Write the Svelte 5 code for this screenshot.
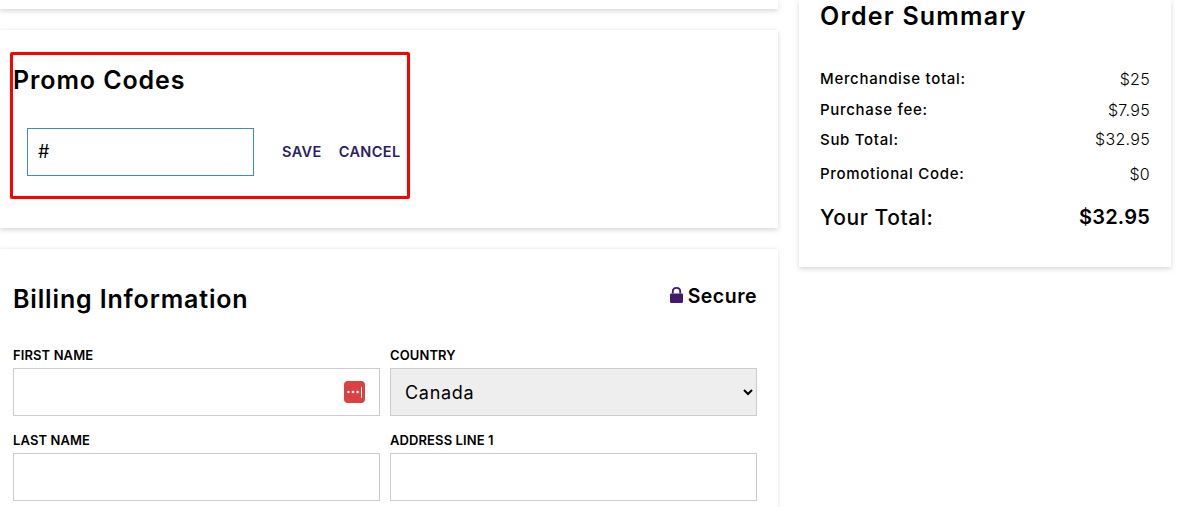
<script>
  const rows = [
    { label: 'Merchandise total:', value: '$25', cls: 'r1' },
    { label: 'Purchase fee:', value: '$7.95', cls: 'r2' },
    { label: 'Sub Total:', value: '$32.95', cls: 'r3' },
    { label: 'Promotional Code:', value: '$0', cls: 'r4' }
  ];
</script>

<div class="page">
  <div class="left">
    <div class="card top"></div>
    <section class="card promo">
      <div class="mark">
        <h2>Promo Codes</h2>
        <div class="promo-row">
          <input class="code" value="#" />
          <button class="link save">SAVE</button>
          <button class="link cancel">CANCEL</button>
        </div>
      </div>
    </section>
    <section class="card billing">
      <div class="billing-head">
        <h2>Billing Information</h2>
        <div class="secure">
          <svg class="lock" width="13" height="16" viewBox="0 0 14 17" aria-hidden="true">
            <path d="M3 7V4.8C3 2.4 4.8.9 7 .9s4 1.5 4 3.9V7" fill="none" stroke="#451a6e" stroke-width="2"/>
            <rect x="0" y="6.8" width="14" height="10.2" rx="1.2" fill="#451a6e"/>
          </svg>
          <span>Secure</span>
        </div>
      </div>
      <div class="grid">
        <div class="field">
          <label for="fn">FIRST NAME</label>
          <div class="input-wrap">
            <input id="fn" />
            <svg class="pw" width="21" height="22" viewBox="0 0 21 22" aria-hidden="true">
              <rect width="21" height="22" rx="4" fill="#dd4040"/>
              <circle cx="4.4" cy="11" r="1.3" fill="#fff"/>
              <circle cx="9" cy="11" r="1.3" fill="#fff"/>
              <circle cx="13.6" cy="11" r="1.3" fill="#fff"/>
              <rect x="17" y="6" width="1" height="11" fill="#fff"/>
            </svg>
          </div>
        </div>
        <div class="field">
          <label for="ct">COUNTRY</label>
          <select id="ct"><option>Canada</option></select>
        </div>
        <div class="field">
          <label for="ln">LAST NAME</label>
          <input id="ln" />
        </div>
        <div class="field">
          <label for="ad">ADDRESS LINE 1</label>
          <input id="ad" />
        </div>
      </div>
    </section>
  </div>

  <aside class="card summary">
    <h2>Order Summary</h2>
    <div class="rows">
      {#each rows as r}
        <div class="row {r.cls}"><span class="lab">{r.label}</span><span class="val">{r.value}</span></div>
      {/each}
    </div>
    <div class="total"><span class="tl">Your Total:</span><strong>$32.95</strong></div>
  </aside>
</div>

<style>
  :global(body) { margin: 0; background: #fff; }
  .page {
    display: flex;
    align-items: flex-start;
    gap: 21px;
    height: 507px;
    overflow: hidden;
    font-family: Inter, "Open Sans", sans-serif;
    color: #000;
  }
  .left { width: 778px; flex: none; display: flex; flex-direction: column; gap: 21px; }
  .card { background: #fff; box-shadow: 0 2px 5px rgba(0, 0, 0, 0.16); }
  .top { height: 9px; }
  .promo { height: 198px; padding: 22px 0 0 10px; box-sizing: border-box; box-shadow: 0 2px 5px rgba(0,0,0,.16), 0 -1px 3px rgba(0,0,0,.02); }
  .mark {
    width: 400px;
    height: 147px;
    box-sizing: border-box;
    border: 3px solid #f00;
    border-radius: 2px;
  }
  h2 { margin: 0; font-weight: 600; }
  .mark h2 { font-size: 25px; letter-spacing: 0.9px; line-height: 32px; margin-top: 9px; }
  .promo-row { display: flex; align-items: center; margin: 32px 0 0 14px; }
  .code {
    width: 227px;
    height: 48px;
    box-sizing: border-box;
    border: 1px solid #3a8cc2;
    padding: 0 10px 2px;
    font: 400 18px Inter, sans-serif;
    color: #000;
    outline: none;
  }
  .link {
    background: none;
    border: 0;
    padding: 0;
    margin-bottom: 2px;
    font: 600 14.5px Inter, sans-serif;
    letter-spacing: 0.4px;
    color: #2b2168;
  }
  .save { margin-left: 28px; }
  .cancel { margin-left: 17px; }
  .billing { height: 320px; padding: 0 21px 0 13px; box-shadow: 0 0 4px rgba(0,0,0,.12); }
  .billing-head { display: flex; justify-content: space-between; align-items: flex-start; padding-top: 33px; }
  .billing-head h2 { font-size: 25px; letter-spacing: 0.85px; line-height: 34px; }
  .secure { display: flex; align-items: center; gap: 5px; font-weight: 600; font-size: 19.5px; letter-spacing: 0.5px; line-height: 28px; }
  .lock { margin-top: -2px; }
  .grid { display: grid; grid-template-columns: 367px 367px; column-gap: 10px; row-gap: 12px; margin-top: 27px; }
  .field { display: flex; flex-direction: column; }
  label { font-size: 13px; font-weight: 600; letter-spacing: 0.1px; line-height: 24px; height: 25px; color: #000; }
  .field input, select {
    width: 100%;
    height: 48px;
    box-sizing: border-box;
    border: 1px solid #ccc;
    background: #fff;
    outline: none;
    margin: 0;
  }
  select {
    background: #eee;
    padding: 0 10px;
    font: 400 18px Inter, sans-serif;
    letter-spacing: 0.7px;
    color: #000;
  }
  .input-wrap { position: relative; }
  .pw { position: absolute; right: 15px; top: 13px; }
  .summary {
    width: 372px;
    flex: none;
    height: 267px;
    box-sizing: border-box;
    padding: 0 21px;
  }
  .summary h2 { font-size: 25px; letter-spacing: 1.2px; line-height: 33px; }
  .rows { margin-top: 30px; }
  .row { display: flex; justify-content: space-between; align-items: center; height: 31px; }
  .r3 { height: 28px; }
  .r4 { height: 41px; }
  .lab { font-weight: 500; font-size: 15px; letter-spacing: 0.7px; }
  .val { font-weight: 300; font-size: 16px; letter-spacing: 0.3px; }
  .total { display: flex; justify-content: space-between; align-items: center; margin-top: 3px; height: 40px; font-size: 20px; font-weight: 500; }
  .tl { font-size: 21px; letter-spacing: 0.55px; }
  .total strong { font-weight: 600; letter-spacing: 0.2px; }
</style>
